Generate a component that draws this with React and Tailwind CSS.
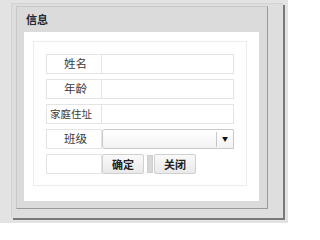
const font = { fontFamily: '"Noto Sans CJK SC", "Liberation Sans", sans-serif' };

function Label({ children, className = '' }) {
  return (
    <div
      className={`flex h-[20px] w-[56px] items-center justify-end border border-[#e4e4e4] text-[#3a3a3a] ${className}`}
    >
      {children}
    </div>
  );
}

function Field() {
  return <div className="h-[20px] w-[132px] border border-l-0 border-[#e4e4e4] bg-white" />;
}

function Btn({ children }) {
  return (
    <button
      type="button"
      className="flex h-[20px] w-[42px] items-center justify-center rounded-[2px] border border-[#d0d0d0] bg-gradient-to-b from-[#fafafa] to-[#e9e9e9] text-[11px] font-bold text-[#222]"
    >
      {children}
    </button>
  );
}

export default function App() {
  return (
    <div className="h-[223px] w-[288px] overflow-hidden bg-[#e3e3e3] pl-[11px] pt-[3px]" style={font}>
      <div className="h-[215px] w-[272px] border-l border-t border-[#d2d2d2] bg-[#dedede] pl-[4px] pt-[2px] shadow-[2px_2px_0_#7a7a7a]">
        <div className="h-[203px] w-[252px] border border-[#c9c9c9] border-r-[#9a9a9a] border-b-[#9a9a9a] bg-[#dbdbdb]">
          <div className="h-[25px] pl-[9px] pt-[6px] text-[11px] font-bold leading-[12px] text-[#1e2a36]">信息</div>
          <div className="ml-[7px] h-[169px] w-[235px] bg-white pl-[9px] pt-[9px]">
            <div className="h-[145px] w-[214px] border border-[#ececec] pl-[12px] pt-[12px]">
              <div className="flex flex-col gap-[5px]">
                <div className="flex">
                  <Label className="pr-[14px] text-[11.5px]">姓名</Label>
                  <Field />
                </div>
                <div className="flex">
                  <Label className="pr-[14px] text-[11.5px]">年龄</Label>
                  <Field />
                </div>
                <div className="flex">
                  <Label className="pr-[9px] text-[10.5px]">家庭住址</Label>
                  <Field />
                </div>
                <div className="flex">
                  <Label className="pr-[14px] text-[11.5px]">班级</Label>
                  <div className="flex h-[20px] w-[132px] items-center rounded-l-[3px] border border-[#c8c8c8] bg-gradient-to-b from-white to-[#f3f3f3]">
                    <div className="flex-1" />
                    <div className="flex h-[15px] w-[17px] items-center justify-center border-l border-[#c8c8c8] text-[6px] leading-none text-[#111]">
                      ▼
                    </div>
                  </div>
                </div>
                <div className="flex items-center">
                  <div className="h-[20px] w-[56px] border border-[#e4e4e4]" />
                  <Btn>确定</Btn>
                  <div className="ml-[3px] mr-[1px] h-[18px] w-[6px] border border-[#cfcfcf] bg-[#d8d8d8]" />
                  <Btn>关闭</Btn>
                </div>
              </div>
            </div>
          </div>
        </div>
      </div>
    </div>
  );
}
